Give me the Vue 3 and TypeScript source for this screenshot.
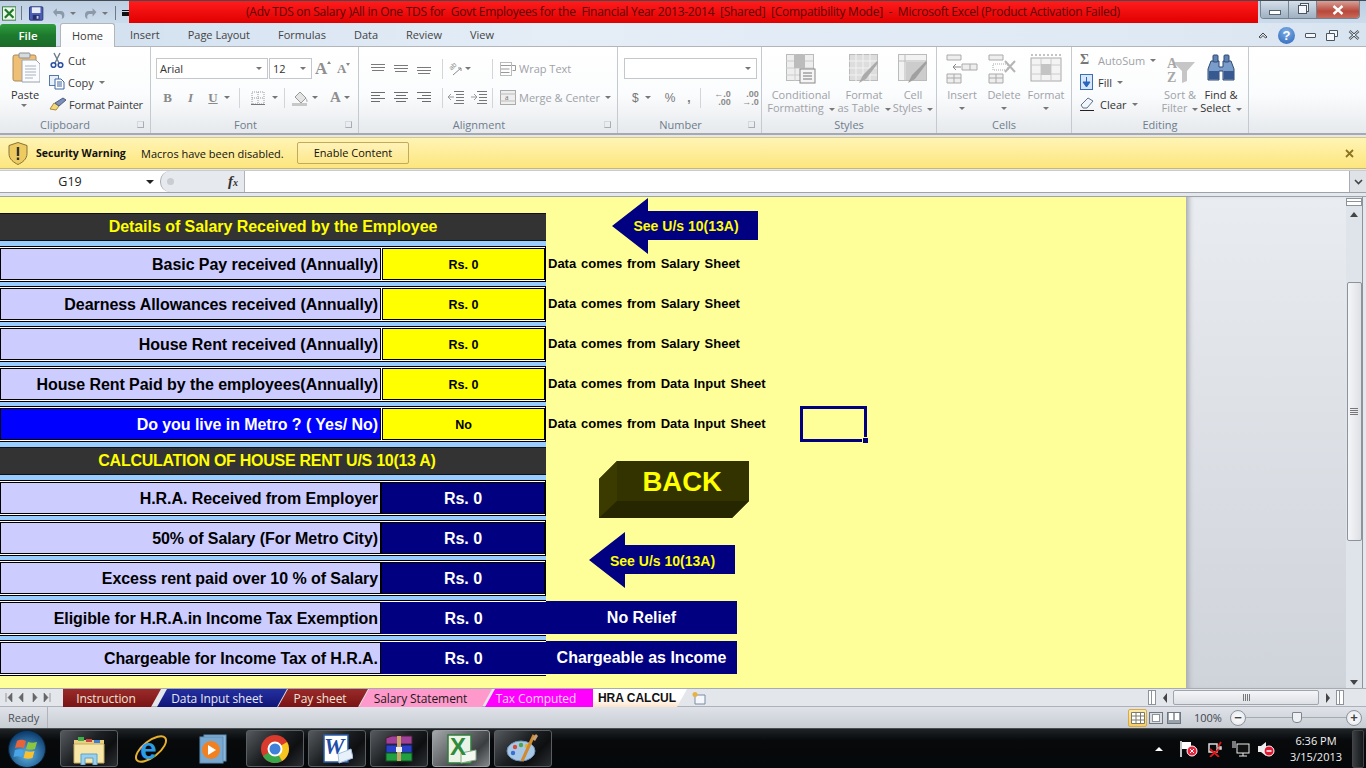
<script setup lang="ts">
interface SheetRow {
  label: string
  value: string
  note?: string
  extra?: string
  kind?: 'metro' | 'calc' | 'open'
}

const salaryRows: SheetRow[] = [
  { label: 'Basic Pay received (Annually)', value: 'Rs. 0', note: 'Data comes from Salary Sheet' },
  { label: 'Dearness Allowances received (Annually)', value: 'Rs. 0', note: 'Data comes from Salary Sheet' },
  { label: 'House Rent received (Annually)', value: 'Rs. 0', note: 'Data comes from Salary Sheet' },
  { label: 'House Rent Paid by the employees(Annually)', value: 'Rs. 0', note: 'Data comes from Data Input Sheet' },
  { label: 'Do you live in Metro ? ( Yes/ No)', value: 'No', note: 'Data comes from Data Input Sheet', kind: 'metro' }
]

const calcRows: SheetRow[] = [
  { label: 'H.R.A. Received from Employer', value: 'Rs. 0', kind: 'calc' },
  { label: '50% of Salary (For Metro City)', value: 'Rs. 0', kind: 'calc' },
  { label: 'Excess rent paid over 10 % of Salary', value: 'Rs. 0', kind: 'calc' },
  { label: 'Eligible for H.R.A.in Income Tax Exemption', value: 'Rs. 0', extra: 'No Relief', kind: 'open' },
  { label: 'Chargeable for Income Tax of H.R.A.', value: 'Rs. 0', extra: 'Chargeable as Income', kind: 'open' }
]

const tabs = ['Insert', 'Page Layout', 'Formulas', 'Data', 'Review', 'View']

const sheetTabs = [
  { name: 'Instruction', cls: 'st-maroon' },
  { name: 'Data Input sheet', cls: 'st-navy' },
  { name: 'Pay sheet', cls: 'st-maroon2' },
  { name: 'Salary Statement', cls: 'st-pink' },
  { name: 'Tax Computed', cls: 'st-magenta' },
  { name: 'HRA CALCUL', cls: 'st-active' }
]
</script>

<template>
  <div class="app">
    <!-- title bar -->
    <div class="titlebar">
      <div class="qat">
        <svg class="xl-ico" width="15" height="15" viewBox="0 0 15 15"><rect x=".5" y=".5" width="14" height="14" fill="#eef6ea" stroke="#2f7d3c"/><path d="M3 3l9 9M12 3l-9 9" stroke="#1f7a2c" stroke-width="2.4"/></svg>
        <span class="qsep"></span>
        <svg width="15" height="15" viewBox="0 0 15 15"><rect x=".5" y=".5" width="14" height="14" rx="1" fill="#4a5fb4" stroke="#2a3878"/><rect x="3" y="1" width="9" height="6" fill="#e8ecf6"/><rect x="4" y="9" width="7" height="5" fill="#27306a"/><rect x="8" y="10" width="2" height="3" fill="#c5cde8"/></svg>
        <svg class="q-undo" width="14" height="13" viewBox="0 0 14 13"><path d="M4 1v3h4c3 0 4 2 4 4s-1 4-3 4c1-1 1-5-2-5H4v3L0 5z" transform="translate(1)" fill="#8c99a8"/></svg>
        <span class="caret q-caret"></span>
        <svg class="q-redo" width="14" height="13" viewBox="0 0 14 13"><path d="M9 1v3H5C2 4 1 6 1 8s1 4 3 4C3 11 3 7 6 7h3v3l4-5z" fill="#8c99a8"/></svg>
        <span class="caret q-caret"></span>
        <span class="qsep qsep2"></span>
        <span class="q-drop"></span>
      </div>
      <div class="red-title">(Adv TDS on Salary )All in One TDS for&nbsp; Govt Employees for the&nbsp; Financial Year 2013-2014&nbsp; [Shared]&nbsp; [Compatibility Mode]&nbsp; -&nbsp; Microsoft Excel (Product Activation Failed)</div>
      <div class="win-btns">
        <div class="wb"><span class="wb-min"></span></div>
        <div class="wb"><span class="wb-max"></span></div>
        <div class="wb wb-close">
          <svg width="12" height="10" viewBox="0 0 12 10"><path d="M1.5 1l9 8M10.5 1l-9 8" stroke="#fff" stroke-width="2.4"/></svg>
        </div>
      </div>
    </div>

    <!-- ribbon tabs -->
    <div class="tabrow">
      <div class="file-tab">File</div>
      <div class="home-tab">Home</div>
      <div class="tab-list">
        <span v-for="t in tabs" :key="t">{{ t }}</span>
      </div>
      <div class="tab-right">
        <svg width="10" height="8" viewBox="0 0 10 8"><path d="M1 6l4-4 4 4-1.5 1L5 4.500 2.500 7z" fill="none" stroke="#444" stroke-width="1"/></svg>
        <span class="help">?</span>
        <span class="mini-min"></span>
        <svg width="12" height="11" viewBox="0 0 12 11"><path d="M3.500 3V.5h8v6H8.500M.5 3.500h8v7h-8z" fill="#f4f7fb" stroke="#4a5560"/></svg>
        <svg width="12" height="10" viewBox="0 0 12 10"><path d="M1.500 1l9 8M10.500 1l-9 8" stroke="#4a5560" stroke-width="2.600"/><path d="M1.500 1l9 8M10.500 1l-9 8" stroke="#f4f7fb" stroke-width="1"/></svg>
      </div>
    </div>

    <!-- ribbon -->
    <div class="ribbon">
      <section class="group g-clip">
        <div class="body">
          <div class="paste">
            <svg width="28" height="31" viewBox="0 0 28 31">
              <rect x="1" y="3" width="23" height="26" rx="2" fill="#eebf75" stroke="#ac8a58"/>
              <rect x="7" y="1" width="11" height="5" rx="1" fill="#d7dade" stroke="#8d8f92"/>
              <path d="M10 8h14l4 4v18H10z" fill="#fbfcfe" stroke="#9aa2ae"/>
              <path d="M13 14h11M13 17h11M13 20h11M13 23h11M13 26h8" stroke="#a9b2bf"/>
            </svg>
            <span class="paste-label">Paste</span>
            <span class="caret"></span>
          </div>
          <div class="clip-list">
            <div class="clip-item">
              <svg width="16" height="16" viewBox="0 0 16 16"><path d="M5 1l5 10M11 1L6 11" stroke="#6f7a88" stroke-width="1.400"/><circle cx="4.500" cy="13" r="2.300" fill="#fff" stroke="#2c4f9e" stroke-width="1.600"/><circle cx="11.500" cy="13" r="2.300" fill="#fff" stroke="#2c4f9e" stroke-width="1.600"/></svg>
              <span class="cut-label">Cut</span>
            </div>
            <div class="clip-item">
              <svg width="16" height="16" viewBox="0 0 16 16"><rect x=".5" y="1.500" width="9" height="10" fill="#e8f0fa" stroke="#5578a8"/><path d="M6 5h6l3 3v7H6z" fill="#fff" stroke="#3f66a2"/><path d="M8 8h5M8 10h5M8 12h5" stroke="#3f66a2"/></svg>
              <span class="cut-label">Copy</span><span class="caret caret-in"></span>
            </div>
            <div class="clip-item painter">
              <svg width="18" height="14" viewBox="0 0 18 14"><path d="M1 12l4-6 5 3-3 4z" fill="#f4d77b" stroke="#a98c3a"/><path d="M6 6l8-5 3 2-7 6z" fill="#7d8fb5" stroke="#4b5d84"/></svg>
              <span>Format Painter</span>
            </div>
          </div>
        </div>
        <div class="group-label lab-wide">Clipboard<span class="launcher"></span></div>
      </section>

      <section class="group g-font">
        <div class="rows">
          <div class="row">
            <div class="combo c-font">Arial<span class="caret"></span></div>
            <div class="combo c-size">12<span class="caret"></span></div>
            <span class="grow-a">A<i class="tri-up"></i></span>
            <span class="shrink-a">A<i class="tri-down"></i></span>
          </div>
          <div class="row font-row2">
            <b class="fmt fmt-b">B</b>
            <i class="fmt fmt-i">I</i>
            <u class="fmt fmt-u">U</u><span class="caret"></span>
            <span class="vsep vs-a"></span>
            <svg class="bd-ico" width="14" height="14" viewBox="0 0 14 14"><path d="M1 1h12v12H1zM7 1v12M1 7h12" fill="none" stroke="#9a9a9a" stroke-dasharray="1 1"/><path d="M0 13.500h14" stroke="#777"/></svg>
            <span class="caret"></span>
            <span class="vsep vs-b"></span>
            <svg class="fill-ico" width="17" height="16" viewBox="0 0 17 16"><path d="M3 7l5-5 6 6-5 5z" fill="#e4e4e4" stroke="#999"/><path d="M14 8c2 2 2 4 1 4s-1-2-1-4z" fill="#b9b9b9"/><rect y="13" width="15" height="3" fill="#c8c8c8"/></svg>
            <span class="caret"></span>
            <span class="color-a">A</span><span class="caret"></span>
          </div>
        </div>
        <div class="group-label lab-pad">Font<span class="launcher"></span></div>
      </section>

      <section class="group g-align">
        <div class="rows">
          <div class="row">
            <span class="cell"><svg width="14" height="9" viewBox="0 0 14 9"><path d="M0 .5h14M0 3.500h14M1 6.500h12" stroke="#7a7a7a"/></svg></span>
            <span class="cell"><svg width="14" height="9" class="mid" viewBox="0 0 14 9"><path d="M0 .5h14M0 3.500h14M1 6.500h12" stroke="#7a7a7a"/></svg></span>
            <span class="cell"><svg width="14" height="9" class="low" viewBox="0 0 14 9"><path d="M0 .5h14M0 3.500h14M1 6.500h12" stroke="#7a7a7a"/></svg></span>
            <span class="vsep vs-c"></span>
            <svg class="orient" width="15" height="14" viewBox="0 0 15 14"><text x="2" y="7" transform="rotate(-45 5 6)" font-size="7" font-family="Liberation Sans" fill="#8a8a8a">ab</text><path d="M5 13l8-7M10 6h3v3" fill="none" stroke="#8a8a8a"/></svg>
            <span class="caret"></span>
            <span class="vsep vs-d"></span>
            <svg width="16" height="14" viewBox="0 0 16 14"><path d="M.5.500h11M.5 3.500h15v5h-3M.5 7h9M.5 10.500h9" fill="none" stroke="#999"/><rect x=".5" y=".5" width="11" height="13" fill="none" stroke="#bbb"/></svg>
            <span class="dim lbl-wrap">Wrap Text</span>
          </div>
          <div class="row">
            <span class="cell"><svg width="14" height="11" viewBox="0 0 14 11"><path d="M0 .5h14M0 3.500h9M0 6.500h14M0 9.500h9" stroke="#6c6c6c"/></svg></span>
            <span class="cell"><svg width="14" height="11" viewBox="0 0 14 11"><path d="M0 .5h14M2 3.500h10M0 6.500h14M2 9.500h10" stroke="#6c6c6c"/></svg></span>
            <span class="cell"><svg width="14" height="11" viewBox="0 0 14 11"><path d="M0 .5h14M5 3.500h9M0 6.500h14M5 9.500h9" stroke="#6c6c6c"/></svg></span>
            <span class="vsep vs-c2"></span>
            <span class="cell indent"><svg width="16" height="13" viewBox="0 0 16 13"><path d="M6 .5h10M8 3.500h8M8 6.500h8M8 9.500h8M6 12.500h10" stroke="#777"/><path d="M0 6h6M3 3L0 6l3 3" fill="none" stroke="#999"/></svg></span>
            <span class="cell indent"><svg width="16" height="13" viewBox="0 0 16 13"><path d="M6 .5h10M8 3.500h8M8 6.500h8M8 9.500h8M6 12.500h10" stroke="#777"/><path d="M0 6h6M3 3l3 3-3 3" fill="none" stroke="#999"/></svg></span>
            <span class="vsep vs-e"></span>
            <svg width="16" height="15" viewBox="0 0 16 15"><rect x=".5" y=".5" width="15" height="14" fill="#eee" stroke="#aaa"/><path d="M0 4h16M0 11h16" stroke="#bbb"/><text x="5" y="10" font-size="8" font-family="Liberation Serif" fill="#777">a</text></svg>
            <span class="dim lbl-wrap">Merge &amp; Center</span><span class="caret caret-in"></span>
          </div>
        </div>
        <div class="group-label lab-pad">Alignment<span class="launcher"></span></div>
      </section>

      <section class="group g-number">
        <div class="rows">
          <div class="row"><div class="combo c-num"><span class="caret"></span></div></div>
          <div class="row num-row2">
            <span class="num-sym n-dollar">$</span><span class="caret"></span>
            <span class="num-sym n-pct">%</span>
            <span class="num-sym n-comma">,</span>
            <span class="vsep vs-f"></span>
            <span class="dec">←.0<br>.00</span>
            <span class="dec dec2">.00<br>→.0</span>
          </div>
        </div>
        <div class="group-label lab-pad">Number<span class="launcher"></span></div>
      </section>

      <section class="group g-styles">
        <div class="big-row">
          <div class="big w-cond">
            <svg width="30" height="30" viewBox="0 0 30 30"><rect x=".5" y=".5" width="27" height="26" fill="#eee" stroke="#bbb"/><path d="M9 0v27M18 0v27M0 7h27M0 14h27M0 21h27" stroke="#ccc"/><rect x="8" y="1" width="11" height="13" fill="#bcbcbc"/><rect x="14" y="15" width="15" height="14" fill="#f5f5f5" stroke="#888"/><path d="M17 19h9M17 22h9M17 25h9" stroke="#777"/></svg>
            <span class="big-label">Conditional<br>Formatting<i class="caret caret-in"></i></span>
          </div>
          <div class="big w-table">
            <svg width="30" height="30" viewBox="0 0 30 30"><rect x=".5" y=".5" width="28" height="26" fill="#ddd" stroke="#bbb"/><path d="M7 0v27M14 0v27M21 0v27M0 7h28M0 14h28M0 21h28" stroke="#f2f2f2"/><path d="M10 29l4-8 14-14 1 2-12 16z" fill="#aaa"/></svg>
            <span class="big-label">Format<br>as Table<i class="caret caret-in"></i></span>
          </div>
          <div class="big w-cell">
            <svg width="30" height="30" viewBox="0 0 30 30"><rect x=".5" y=".5" width="28" height="26" fill="#f2f2f2" stroke="#bbb"/><path d="M0 7h28M7 0v27" stroke="#bbb"/><rect x="8" y="8" width="20" height="18" fill="#ccc"/><path d="M10 29l4-8 14-14 1 2-12 16z" fill="#a0a0a0"/></svg>
            <span class="big-label">Cell<br>Styles<i class="caret caret-in"></i></span>
          </div>
        </div>
        <div class="group-label">Styles</div>
      </section>

      <section class="group g-cells">
        <div class="big-row">
          <div class="big w-ins">
            <svg width="32" height="30" viewBox="0 0 32 30"><path d="M1 1h14v5H1zM1 20h14v9H1zM8 20v9M1 24h14M16 10h15v6H16zM24 10v6" fill="#eee" stroke="#aaa"/><path d="M7 13h8M10 10l-3 3 3 3" fill="none" stroke="#888"/></svg>
            <span class="big-label">Insert</span><span class="caret"></span>
          </div>
          <div class="big w-ins">
            <svg width="32" height="30" viewBox="0 0 32 30"><path d="M1 1h14v5H1zM1 20h14v9H1zM8 20v9M1 24h14" fill="#eee" stroke="#aaa"/><rect x="5" y="10" width="15" height="6" fill="none" stroke="#aaa" stroke-dasharray="1 1"/><path d="M17 7l10 11M27 7L17 18" stroke="#b5b5b5" stroke-width="2"/></svg>
            <span class="big-label">Delete</span><span class="caret"></span>
          </div>
          <div class="big w-ins">
            <svg width="32" height="30" viewBox="0 0 32 30"><rect x="1" y="4" width="30" height="23" fill="#f3f3f3" stroke="#aaa"/><path d="M1 11h30M1 20h30M11 4v23M21 4v23" stroke="#ccc"/><rect x="11" y="10" width="10" height="11" fill="#c4c4c4"/><path d="M1 1h30" stroke="#888" stroke-dasharray="2 2"/></svg>
            <span class="big-label">Format</span><span class="caret"></span>
          </div>
        </div>
        <div class="group-label">Cells</div>
      </section>

      <section class="group g-edit">
        <div class="body">
          <div class="edit-list">
            <div class="clip-item"><span class="sigma">Σ</span><span class="dim">AutoSum</span><span class="caret caret-in"></span></div>
            <div class="clip-item">
              <svg width="13" height="16" viewBox="0 0 13 16"><rect x=".5" y=".5" width="12" height="15" fill="#d7e6f8" stroke="#3a6fb8"/><path d="M6.500 3v6M3 8h7l-3.500 5z" fill="#2a66c0" stroke="#2a66c0"/></svg>
              <span class="edit-txt">Fill</span><span class="caret caret-in"></span>
            </div>
            <div class="clip-item">
              <svg width="15" height="14" viewBox="0 0 15 14"><path d="M1 8l7-7 5 3-6 7H3z" fill="#f3f6fa" stroke="#5d7390"/><path d="M0 13.500h14" stroke="#222"/></svg>
              <span class="edit-txt">Clear</span><span class="caret caret-in"></span>
            </div>
          </div>
          <div class="big w-sort">
            <svg width="30" height="30" viewBox="0 0 30 30"><path d="M8 8h22l-8 9v10l-5 2V17z" fill="#c6c6c6"/><text x="2" y="14" font-size="14" font-weight="700" font-family="Liberation Serif" fill="#a8a8a8">A</text><text x="2" y="28" font-size="14" font-weight="700" font-family="Liberation Serif" fill="#a8a8a8">Z</text></svg>
            <span class="big-label">Sort &amp;<br>Filter<i class="caret caret-in"></i></span>
          </div>
          <div class="big w-find">
            <svg width="28" height="30" viewBox="0 0 28 30">
              <path d="M4 7h8v6h4V7h8l3 8v11H16V17h-4v9H1V15z" fill="#7a9ccb" stroke="#30496f"/>
              <rect x="2" y="17" width="10" height="8" fill="#38598f"/>
              <rect x="17" y="17" width="10" height="8" fill="#38598f"/>
              <rect x="6" y="1" width="5" height="7" rx="1" fill="#5f81b6" stroke="#30496f"/>
              <rect x="17" y="1" width="5" height="7" rx="1" fill="#5f81b6" stroke="#30496f"/>
            </svg>
            <span class="big-label dark">Find &amp;<br>Select<i class="caret caret-in"></i></span>
          </div>
        </div>
        <div class="group-label">Editing</div>
      </section>
    </div>

    <!-- security warning -->
    <div class="security">
      <svg class="shield" width="20" height="23" viewBox="0 0 20 23"><path d="M10 .5l9 3v8c0 6-5 9-9 11-4-2-9-5-9-11v-8z" fill="#eecb60" stroke="#857238"/><rect x="8.800" y="5" width="2.400" height="9" fill="#333"/><rect x="8.800" y="15.500" width="2.400" height="2.500" fill="#333"/></svg>
      <b class="sec-title">Security Warning</b>
      <span class="sec-text">Macros have been disabled.</span>
      <span class="sec-btn">Enable Content</span>
      <svg class="sec-x" width="9" height="9" viewBox="0 0 9 9"><path d="M1 1l7 7M8 1L1 8" stroke="#8c7420" stroke-width="1.800"/></svg>
    </div>

    <!-- formula bar -->
    <div class="formula">
      <div class="namebox">G19<span class="caret dark-caret"></span></div>
      <div class="fx-zone"><span class="fx-pill"></span><i class="fx">f<small>x</small></i></div>
      <div class="fx-input"></div>
      <div class="fx-expand"><svg width="9" height="6" viewBox="0 0 9 6"><path d="M1 1l3.500 3.500L8 1" fill="none" stroke="#444" stroke-width="1.600"/></svg></div>
    </div>

    <!-- sheet -->
    <div class="sheet-area">
      <div class="sheet">
        <h2 class="band">Details of Salary Received by the Employee</h2>
        <div v-for="(row, i) in salaryRows" :key="row.label" class="line">
          <div class="pair" :class="{ first: i === 0 }">
            <div class="frame" :class="row.kind">
              <div class="label">{{ row.label }}</div>
              <div class="value">{{ row.value }}</div>
            </div>
          </div>
          <div class="note">{{ row.note }}</div>
        </div>
        <div class="gutter"></div>
        <h2 class="band band-calc">CALCULATION OF HOUSE RENT U/S 10(13 A)</h2>
        <div v-for="(row, i) in calcRows" :key="row.label" class="line">
          <div class="pair" :class="{ first: i === 0 }">
            <div class="frame" :class="row.kind">
              <div class="label">{{ row.label }}</div>
              <div class="value">{{ row.value }}</div>
            </div>
          </div>
          <div v-if="row.extra" class="extra">{{ row.extra }}</div>
        </div>

        <svg class="arrow arrow-a" width="147" height="56" viewBox="0 0 147 56">
          <path d="M0 28L36 0v13h110v29H36v14z" fill="#000080"/>
          <text x="21.500" y="33" class="arrow-text">See U/s 10(13A)</text>
        </svg>
        <svg class="arrow arrow-b" width="147" height="56" viewBox="0 0 147 56">
          <path d="M0 28L36 0v13h110v29H36v14z" fill="#000080"/>
          <text x="21" y="34" class="arrow-text">See U/s 10(13A)</text>
        </svg>
        <svg class="back" width="150" height="57" viewBox="0 0 150 57">
          <path d="M0 18L18 0h132v40l-17 17H0z" fill="#333300"/>
          <path d="M0 18L18 0v40L0 57z" fill="#3b3b00"/>
          <path d="M18 40h132l-17 17H0z" fill="#262600"/>
          <text x="43.500" y="30" class="back-text">BACK</text>
        </svg>
        <div class="selected"><span class="handle"></span></div>
      </div>
      <div class="outside"></div>
      <div class="vscroll">
        <span class="split-h"></span>
        <span class="tri tri-u"></span>
        <div class="v-thumb"><span class="grip-h"></span></div>
        <span class="tri tri-d"></span>
      </div>
    </div>

    <!-- sheet tabs -->
    <div class="tabsbar">
      <div class="tab-nav">
        <svg width="48" height="9" viewBox="0 0 48 9"><path d="M1 0v9M7 0L3 4.500 7 9zM18 0l-4 4.500L18 9zM28 0l4 4.500L28 9zM39 0l4 4.500L39 9zM45 0v9" fill="#666" stroke="#666" stroke-width=".6"/></svg>
      </div>
      <div class="sheet-tabs">
        <span v-for="s in sheetTabs" :key="s.name" class="stab" :class="s.cls">{{ s.name }}</span>
        <svg class="new-sheet" width="16" height="14" viewBox="0 0 16 14"><path d="M4 4h10v9H4z" fill="#f4f7fb" stroke="#7a8ca5"/><circle cx="4" cy="3.500" r="2.500" fill="#e9b23f"/></svg>
      </div>
      <div class="hscroll">
        <span class="split-v"></span>
        <span class="tri tri-l"></span>
        <div class="h-thumb"><span class="grip-v"></span></div>
        <span class="tri tri-r"></span>
        <span class="split-v"></span>
      </div>
    </div>

    <!-- status bar -->
    <div class="status">
      <span class="ready">Ready</span>
      <div class="status-right">
        <span class="view view-on"><svg width="14" height="12" viewBox="0 0 14 12"><path d="M.5.500h13v11H.5zM.5 4h13M.5 8h13M5 .5v11M9.500.500v11" fill="#fff" stroke="#7a7a6a"/></svg></span>
        <span class="view"><svg width="14" height="12" viewBox="0 0 14 12"><rect x=".5" y=".5" width="13" height="11" fill="#d9dde2" stroke="#6e7680"/><rect x="3.500" y="2.500" width="7" height="7" fill="#fff" stroke="#8a929c"/></svg></span>
        <span class="view"><svg width="14" height="12" viewBox="0 0 14 12"><rect x=".5" y=".5" width="13" height="11" fill="#9aa2ab" stroke="#6e7680"/><rect x="2" y="1" width="4" height="7" fill="#fff"/><rect x="8" y="1" width="4" height="7" fill="#fff"/></svg></span>
        <span class="zoom-pct">100%</span>
        <span class="zoom-btn">−</span>
        <div class="slider"><span class="slider-thumb"></span></div>
        <span class="zoom-btn">+</span>
      </div>
    </div>

    <!-- taskbar -->
    <div class="taskbar">
      <svg class="orb" width="38" height="38" viewBox="0 0 38 38">
        <defs>
          <radialGradient id="orbg" cx="50%" cy="65%" r="60%"><stop offset="0" stop-color="#5fb4e8"/><stop offset="1" stop-color="#0f3f70"/></radialGradient>
        </defs>
        <circle cx="19" cy="19" r="18.500" fill="url(#orbg)" stroke="#0b2238"/>
        <path d="M9 11c4-2 6-1 9 0l-2 7c-3-1-6-1-9 0z" fill="#e8623a"/>
        <path d="M20 12c3 1 5 1 9 0l-2 7c-3 1-6 1-9 0z" fill="#8cc63e"/>
        <path d="M7 20c3-1 6-1 8.500 0l-2 7c-3-1-5-1-8 0z" fill="#48a5e8"/>
        <path d="M17.500 21c3 1 6 1 9 0l-2 7c-3 1-6 1-9 0z" fill="#f7c02f"/>
      </svg>
      <div class="task framed">
        <svg width="34" height="32" viewBox="0 0 34 32"><path d="M2 7h30v22H2z" fill="#e8cf84"/><path d="M2 11h30v19H2z" fill="#f6e6a8" stroke="#c9ab5e"/><rect x="6" y="4" width="6" height="4" fill="#3fae49"/><rect x="14" y="6" width="6" height="3" fill="#c8443c"/><rect x="22" y="7" width="6" height="3" fill="#3d7fd0"/><path d="M9 32V21h16v11h-4v-7h-8v7z" fill="#9ad0ee" stroke="#5da2cc"/></svg>
      </div>
      <div class="task">
        <svg width="34" height="34" viewBox="0 0 34 34"><ellipse cx="17" cy="17" rx="18" ry="8" transform="rotate(-38 17 17)" fill="none" stroke="#e8b12c" stroke-width="2"/><text x="6" y="27" class="ie-e">e</text></svg>
      </div>
      <div class="task">
        <svg width="28" height="30" viewBox="0 0 28 30"><rect x="5" y="1" width="22" height="26" fill="#8fb6d8" stroke="#5f8fb8"/><rect x="1" y="3" width="23" height="26" fill="#78a8d0" stroke="#5f8fb8"/><circle cx="12" cy="16" r="9" fill="#f08020"/><path d="M9 11l8 5-8 5z" fill="#fff"/></svg>
      </div>
      <div class="task framed">
        <svg width="30" height="30" viewBox="0 0 30 30"><circle cx="15" cy="15" r="14" fill="#d83a2c"/><path d="M15 15L2.900 22A14 14 0 0 0 22 27.100z" fill="#3aa84a"/><path d="M15 15l12.100-7A14 14 0 0 1 22 27.100z" fill="#f6c51f"/><circle cx="15" cy="15" r="6.500" fill="#3f80d8" stroke="#fff" stroke-width="2"/></svg>
      </div>
      <div class="task framed">
        <svg width="32" height="30" viewBox="0 0 32 30"><path d="M3 1h24v27H3z" fill="#fff" stroke="#2a5ca8" stroke-width="1.500"/><path d="M17 20l13-5 2 9-14 5z" fill="#e8f0fa" stroke="#a8c0e0"/><text x="3" y="20" class="word-w">W</text></svg>
      </div>
      <div class="task framed">
        <svg width="32" height="28" viewBox="0 0 32 28"><path d="M3 3l6-2h20v8H3z" fill="#a0409a" stroke="#4a2030"/><rect x="3" y="10" width="26" height="8" fill="#2a40c8" stroke="#10205a"/><rect x="3" y="18" width="26" height="8" fill="#20a040" stroke="#105020"/><rect x="14" y="1" width="4" height="25" fill="#c9a468"/><rect x="13" y="12" width="6" height="5" fill="#eee"/></svg>
      </div>
      <div class="task framed active">
        <svg width="32" height="30" viewBox="0 0 32 30"><rect x="3" y="1" width="23" height="28" fill="#eaf3e6" stroke="#2f7d3c" stroke-width="1.500"/><path d="M16 19l15-3v10l-15 3z" fill="#f3f7ef" stroke="#88a888"/><text x="5" y="21" class="excel-x">X</text></svg>
      </div>
      <div class="task framed">
        <svg width="34" height="32" viewBox="0 0 34 32"><ellipse cx="15" cy="18" rx="14" ry="10" fill="#a8c8e8" stroke="#6f93b8"/><circle cx="9" cy="14" r="2.200" fill="#d84a3a"/><circle cx="15" cy="12" r="2.200" fill="#4aa84a"/><circle cx="7" cy="20" r="2.200" fill="#3a6fd0"/><circle cx="21" cy="13" r="2.200" fill="#e8b02a"/><path d="M28 2L16 28" stroke="#d08a30" stroke-width="3"/><path d="M26 6l4-5 2 2-3 5z" fill="#c8a078"/></svg>
      </div>
      <div class="tray">
        <span class="tray-up"></span>
        <svg width="20" height="16" viewBox="0 0 20 16"><path d="M1 0v16" stroke="#fff" stroke-width="1.500"/><path d="M2 1h9v7H2z" fill="#fff"/><circle cx="12" cy="10" r="5" fill="#e8243c" stroke="#fff"/><path d="M10 8l4 4M14 8l-4 4" stroke="#fff"/></svg>
        <svg width="18" height="16" viewBox="0 0 18 16"><path d="M2 3h8v3h4v2h-4v3H2z" fill="none" stroke="#ddd" stroke-width="1.500"/><path d="M14 1l-3 5M3 8l9 8M12 8l-9 8" stroke="#e01818" stroke-width="1.800"/></svg>
        <svg width="18" height="16" viewBox="0 0 18 16"><rect x="5" y="3" width="12" height="9" fill="#111" stroke="#eee"/><path d="M7 15h8M11 12v3M1 0v7M3 0v7" stroke="#eee"/></svg>
        <svg width="18" height="16" viewBox="0 0 18 16"><path d="M1 5h3l5-4v14l-5-4H1z" fill="#eee"/><circle cx="12" cy="10" r="5" fill="#e01830" stroke="#fff"/><path d="M9.500 10h5" stroke="#fff" stroke-width="1.500"/></svg>
      </div>
      <div class="clock"><span>6:36 PM</span><span>3/15/2013</span></div>
      <span class="show-desk"></span>
    </div>
  </div>
</template>

<style>
html, body {
  margin: 0;
  overflow: hidden;
  background: #000;
}
</style>

<style scoped>
.app {
  width: 1366px;
  height: 768px;
  display: flex;
  flex-direction: column;
  overflow: hidden;
  font-family: "Open Sans", "Liberation Sans", sans-serif;
  font-size: 11px;
  color: #3b3b3b;
  background: #e4e8ee;
}

.caret {
  display: inline-block;
  width: 0;
  height: 0;
  flex: none;
  border-left: 3px solid transparent;
  border-right: 3px solid transparent;
  border-top: 3px solid #777;
}
.caret-in { margin-left: 5px; vertical-align: middle; }

/* title bar */
.titlebar {
  height: 23px;
  flex: none;
  display: flex;
  background: linear-gradient(#bdcfe2, #cddcec);
  border-top: 1px solid #444a52;
  box-sizing: border-box;
}
.qat { width: 129px; display: flex; align-items: center; padding: 2px 0 0 2px; box-sizing: border-box; flex: none; }
.qsep { width: 1px; height: 14px; background: #6e7884; margin: 0 7px 0 5px; }
.qsep2 { margin: 0 5px 0 7px; }
.q-undo { margin-left: 8px; }
.q-redo { margin-left: 8px; }
.q-caret { margin-left: 5px; }
.q-drop { width: 7px; height: 1px; border-bottom: 4px solid #111; border-top: 1px solid #111; margin-left: 1px; }
.red-title {
  width: 1129px;
  height: 22px;
  flex: none;
  box-sizing: border-box;
  padding-right: 21px;
  text-align: center;
  line-height: 22px;
  font-size: 12px;
  white-space: nowrap;
  color: #5c0505;
  background: linear-gradient(#ff1c1c, #e00000);
  letter-spacing: -0.26px;
}
.win-btns { display: flex; height: 18px; margin-left: 2px; border: 1px solid #75828f; border-top: none; border-radius: 0 0 4px 4px; box-sizing: border-box; overflow: hidden; }
.wb { width: 27px; display: flex; align-items: center; justify-content: center; background: linear-gradient(#d4dfea, #9fb0c2); border-right: 1px solid #75828f; }
.wb-close { width: 42px; border: none; background: linear-gradient(#d8a198, #b8483a 60%, #c86a5c); }
.wb-min { width: 10px; height: 3px; border: 1px solid #56626e; background: #fff; margin-top: 6px; }
.wb-max { width: 7px; height: 7px; border: 1px solid #4b5560; box-shadow: 2px -2px 0 -1px #f4f7fb, 2px -2px 0 0 #4b5560; background: #f4f7fb; }

/* tabs */
.tabrow {
  height: 24px;
  flex: none;
  display: flex;
  align-items: flex-end;
  background: linear-gradient(90deg, #cfdeee, #e5eef7 40%, #dfe9f4 85%, #d8e4f0);
  box-sizing: border-box;
  border-bottom: 1px solid #b2b5b9;
  position: relative;
}
.file-tab {
  width: 56px;
  height: 23px;
  margin-bottom: -1px;
  background: linear-gradient(#2f9d3e, #1d7a2d 50%, #1c6a2a);
  color: #fff;
  text-align: center;
  line-height: 23px;
  font-size: 11.5px;
  border-radius: 3px 3px 0 0;
  font-weight: 600;
}
.home-tab {
  width: 55px;
  height: 24px;
  margin: 0 0 -1px 4px;
  background: linear-gradient(#fff, #fafbfc);
  border: 1px solid #b2b5b9;
  border-bottom: none;
  border-radius: 3px 3px 0 0;
  text-align: center;
  line-height: 23px;
  box-sizing: border-box;
  position: relative;
}
.tab-list { display: flex; gap: 28px; height: 22px; line-height: 22px; margin-left: 15px; color: #444; }
.tab-right {
  margin-left: auto;
  display: flex;
  align-items: center;
  gap: 10px;
  height: 22px;
  padding-right: 6px;
}
.help {
  width: 17px;
  height: 17px;
  border-radius: 50%;
  background: radial-gradient(circle at 50% 30%, #7fb0e8, #2a62b8);
  color: #fff;
  font: 700 13px/17px "Liberation Sans", sans-serif;
  text-align: center;
}
.mini-min { width: 9px; height: 3px; border: 1px solid #4a5560; background: #f4f7fb; border-radius: 1px; }

/* ribbon */
.ribbon {
  height: 88px;
  flex: none;
  display: flex;
  background: linear-gradient(#fff, #fbfcfd 55%, #e6e9ed);
  border-bottom: 2px solid #a6a9ad;
  box-sizing: border-box;
}
.group {
  display: flex;
  flex-direction: column;
  flex: none;
  box-sizing: border-box;
  border-right: 1px solid #c5cad0;
  position: relative;
}
.g-clip { width: 151px; }
.g-font { width: 208px; }
.g-align { width: 259px; }
.g-number { width: 144px; }
.g-styles { width: 175px; }
.g-cells { width: 135px; }
.g-edit { width: 177px; }
.group-label {
  margin-top: auto;
  height: 16px;
  line-height: 16px;
  text-align: center;
  color: #6e7c8d;
  position: relative;
  box-sizing: border-box;
}
.lab-wide { padding-right: 20px; }
.lab-pad { padding-right: 18px; }
.launcher {
  position: absolute;
  right: 6px;
  top: 4px;
  width: 5px;
  height: 5px;
  border: 1px solid #a8adb3;
  border-left-color: #d5d8db;
  border-top-color: #d5d8db;
}
.body { display: flex; }
.paste {
  width: 48px;
  padding: 5px 0 0 12px;
  box-sizing: border-box;
  display: flex;
  flex-direction: column;
  align-items: flex-start;
}
.paste-label { margin: 5px 0 2px -1px; color: #333; line-height: 14px; }
.paste .caret { margin-left: 9px; }
.clip-list { padding-top: 2px; margin-left: 1px; }
.clip-item { height: 22px; display: flex; align-items: center; white-space: nowrap; }
.cut-label { margin-left: 3px; }
.painter svg { margin-right: 2px; }
.painter span { letter-spacing: -0.2px; }

.rows { padding: 11px 0 0 0; display: flex; flex-direction: column; gap: 8px; }
.row { display: flex; align-items: center; height: 21px; }
.combo {
  height: 21px;
  box-sizing: border-box;
  border: 1px solid #c4c8cd;
  background: #fff;
  display: flex;
  align-items: center;
  justify-content: space-between;
  padding: 0 5px 0 3px;
  font-size: 11px;
  color: #333;
}
.c-font { width: 112px; margin-left: 5px; }
.c-size { width: 43px; margin-left: 1px; }
.c-num { width: 133px; margin-left: 6px; justify-content: flex-end; }
.grow-a, .shrink-a, .color-a {
  font-family: "Liberation Serif", serif;
  font-weight: 700;
  color: #8f8f8f;
  position: relative;
}
.grow-a { font-size: 17px; margin-left: 3px; width: 22px; }
.shrink-a { font-size: 13px; width: 14px; }
.tri-up, .tri-down { position: absolute; left: 12px; top: 2px; width: 0; height: 0; border-left: 2px solid transparent; border-right: 2px solid transparent; }
.tri-up { border-bottom: 3px solid #888; }
.tri-down { left: 9px; border-top: 3px solid #888; }
.font-row2 .caret { margin-left: 3px; }
.fmt {
  font: 700 13px "Liberation Serif", serif;
  color: #8a8a8a;
  width: 23px;
  text-align: center;
}
.fmt-b { margin-left: 5px; }
.fmt-u { width: 16px; margin-left: 3px; }
.fmt-i { font-style: italic; }
.vsep { width: 1px; height: 20px; background: #d2d6db; flex: none; }
.vs-a { margin: 0 11px 0 9px; }
.bd-ico { margin-right: 4px; }
.vs-b { margin: 0 7px 0 6px; }
.color-a { font-size: 15px; margin-left: 12px; }
.cell { width: 23px; display: flex; justify-content: center; flex: none; }
.cell:first-child { margin-left: 7px; }
.mid { transform: translateY(1px); }
.low { transform: translateY(3px); }
.vs-c { margin: 0 5px 0 7px; }
.vs-c2 { margin: 0 1px 0 7px; }
.orient { margin-right: 2px; overflow: visible; }
.vs-d { margin: 0 7px 0 21px; }
.indent { width: 23px; }
.vs-e { margin: 0 7px 0 2px; }
.dim { color: #9ea2a7; }
.lbl-wrap { margin-left: 3px; }
.num-sym { font-family: "Liberation Sans", sans-serif; color: #777; font-size: 12px; }
.num-row2 .caret { margin-left: 6px; }
.n-dollar { margin-left: 14px; }
.n-pct { margin-left: 14px; }
.n-comma { margin-left: 12px; font-weight: 700; }
.vs-f { margin: 0 12px 0 9px; }
.dec {
  font: 700 9px/8px "Liberation Sans", sans-serif;
  color: #8a8a8a;
  text-align: right;
  width: 18px;
}
.dec2 { margin-left: 10px; }

.big-row { display: flex; }
.big {
  display: flex;
  flex-direction: column;
  align-items: center;
  padding-top: 7px;
  flex: none;
}
.big-label {
  margin-top: 4px;
  text-align: center;
  line-height: 13px;
  color: #9ea2a7;
  white-space: nowrap;
}
.big-label.dark { color: #333; }
.big .caret { margin-top: 6px; }
.big-label .caret { margin-top: 0; }
.w-cond { width: 78px; }
.w-table { width: 54px; margin-left: -3px; }
.w-cell { width: 44px; }
.w-ins { width: 42px; }
.w-ins:first-child { margin-left: 4px; }
.edit-list { width: 86px; padding: 2px 0 0 8px; box-sizing: border-box; }
.sigma { width: 18px; font: 700 14px "Liberation Serif", serif; color: #777; }
.edit-txt { margin-left: 5px; color: #333; }
.w-sort { width: 44px; }
.w-find { width: 38px; }

/* security bar */
.security {
  height: 32px;
  flex: none;
  margin-top: 2px;
  display: flex;
  align-items: center;
  background: linear-gradient(#fff4b4, #fde67e);
  border-top: 1px solid #d9c87c;
  border-bottom: 1px solid #c8b86c;
  box-sizing: border-box;
  padding-left: 8px;
  color: #111;
}
.shield { flex: none; }
.sec-title { margin-left: 8px; width: 105px; font-weight: 700; white-space: nowrap; font-size: 10.500px; }
.sec-text { width: 156px; white-space: nowrap; font-size: 11px; }
.sec-btn {
  width: 112px;
  height: 22px;
  line-height: 20px;
  text-align: center;
  border: 1px solid #c2aa5a;
  border-radius: 2px;
  box-sizing: border-box;
  background: linear-gradient(#fff3b8, #fde88c);
  font-size: 11px;
}
.sec-x { margin-left: auto; margin-right: 12px; }

/* formula bar */
.formula {
  height: 23px;
  flex: none;
  margin-top: 1px;
  display: flex;
  background: #fff;
  border-top: 1px solid #c8ccd1;
  border-bottom: 1px solid #9ea3a9;
  box-sizing: border-box;
}
.namebox {
  width: 160px;
  display: flex;
  align-items: center;
  justify-content: center;
  padding-right: 20px;
  box-sizing: border-box;
  position: relative;
  color: #222;
  font-size: 12.500px;
}
.dark-caret { position: absolute; right: 6px; top: 9px; border-top-color: #222; border-left-width: 4px; border-right-width: 4px; border-top-width: 4px; }
.fx-zone {
  width: 85px;
  background: #e6e9ee;
  border-right: 1px solid #b0b4b9;
  box-sizing: border-box;
  border-radius: 10px 0 0 10px;
  border-left: 1px solid #a8acb2;
  display: flex;
  align-items: center;
  padding: 0 6px 0 6px;
}
.fx-pill { width: 7px; height: 7px; border-radius: 50%; background: #c9cdd2; }
.fx {
  margin-left: auto;
  font: italic 700 15px "Liberation Serif", serif;
  color: #333;
}
.fx small { font-size: 10px; }
.fx-input { flex: 1; }
.fx-expand {
  width: 16px;
  background: #dfe3e8;
  border-left: 1px solid #aab;
  display: flex;
  align-items: center;
  justify-content: center;
}

/* sheet */
.sheet-area {
  flex: none;
  height: 492px;
  margin-top: 3px;
  border-top: 1px solid #9ea3a9;
  box-sizing: border-box;
  display: flex;
  background: #e4e8ee;
}
.sheet {
  width: 1186px;
  flex: none;
  background: #ffff99;
  padding-top: 16px;
  box-sizing: border-box;
  position: relative;
  font-family: "Liberation Sans", Arial, sans-serif;
}
.band {
  width: 546px;
  height: 28px;
  margin: 0;
  background: #333333;
  color: #ffff00;
  font-size: 16px;
  font-weight: 700;
  line-height: 25px;
  text-align: center;
  box-sizing: border-box;
  border-top: 1px solid #111;
  border-bottom: 1px solid #111;
  white-space: nowrap;
  letter-spacing: -0.05px;
}
.band-calc { letter-spacing: -0.27px; padding-right: 12px; }
.line { display: flex; }
.pair {
  width: 546px;
  flex: none;
  background: #99ccff;
  padding-top: 4px;
}
.pair.first { padding-top: 5px; }
.gutter { width: 546px; height: 5px; background: #99ccff; }
.frame {
  height: 36px;
  box-sizing: border-box;
  border: 1px solid #000;
  border-left: none;
  padding: 1px 0 1px 0;
  display: flex;
  background: #fff;
}
.label {
  width: 381px;
  box-sizing: border-box;
  background: #ccccff;
  border: 1px solid #000;
  border-left: 1px solid #000;
  color: #000;
  font-size: 16px;
  font-weight: 700;
  text-align: right;
  line-height: 32px;
  padding-right: 2px;
  white-space: nowrap;
  letter-spacing: -0.06px;
  overflow: hidden;
}
.value {
  width: 163px;
  margin-left: 1px;
  box-sizing: border-box;
  background: #ffff00;
  border: 1px solid #000;
  color: #000;
  font-size: 12.500px;
  font-weight: 700;
  text-align: center;
  line-height: 32px;
  overflow: hidden;
}
.metro .label { background: #0000ff; color: #fff; }
.calc .value, .open .value {
  background: #000080;
  color: #fff;
  font-size: 16px;
}
.calc .value { margin-left: 0; width: 164px; }
.open { border-right: none; border-color: #000; }
.open .value { margin-left: 0; width: 165px; border: none; line-height: 34px; }
.note {
  margin-left: 2px;
  align-self: flex-end;
  height: 36px;
  font-size: 13px;
  font-weight: 700;
  line-height: 36px;
  color: #000;
  word-spacing: 1.200px;
  white-space: nowrap;
}
.extra {
  width: 191px;
  height: 33px;
  margin-top: 5px;
  background: #000080;
  color: #fff;
  font-size: 16px;
  font-weight: 700;
  line-height: 33px;
  text-align: center;
  white-space: nowrap;
}
.arrow { position: absolute; }
.arrow-a { left: 612px; top: 1px; }
.arrow-b { left: 589px; top: 335px; }
.arrow-text {
  font: 700 14px "Liberation Sans", sans-serif;
  fill: #ffff00;
}
.back { position: absolute; left: 599px; top: 264px; }
.back-text {
  font: 700 27.500px "Liberation Sans", sans-serif;
  fill: #ffff00;
}
.selected {
  position: absolute;
  left: 800px;
  top: 209px;
  width: 67px;
  height: 36px;
  box-sizing: border-box;
  border: 3px solid #000080;
}
.handle {
  position: absolute;
  right: -4px;
  bottom: -4px;
  width: 5px;
  height: 5px;
  background: #000080;
  border-left: 1px solid #ffff99;
  border-top: 1px solid #ffff99;
}
.outside {
  width: 160px;
  flex: none;
  background: linear-gradient(#e9ecf0, #cfd3da);
  box-shadow: inset 6px 0 5px -3px #a9adb3;
}
.vscroll {
  width: 16px;
  flex: none;
  background: #dfe3ea;
  border-right: 1px solid #8d939b;
  display: flex;
  flex-direction: column;
  align-items: center;
  position: relative;
}
.split-h {
  width: 14px;
  height: 6px;
  margin-top: 1px;
  border: 1px solid #8d939b;
  background: linear-gradient(#fff 35%, #8d939b 35%, #8d939b 55%, #fff 55%);
  box-sizing: content-box;
  flex: none;
}
.tri { width: 0; height: 0; flex: none; }
.tri-u { margin-top: 6px; border-left: 4px solid transparent; border-right: 4px solid transparent; border-bottom: 5px solid #444; }
.tri-d { margin-top: auto; margin-bottom: 3px; border-left: 4px solid transparent; border-right: 4px solid transparent; border-top: 5px solid #444; }
.v-thumb {
  width: 15px;
  height: 259px;
  margin-top: 65px;
  box-sizing: border-box;
  border: 1px solid #8d939b;
  background: linear-gradient(90deg, #f5f6f8, #dde0e5);
  border-radius: 2px;
  display: flex;
  align-items: center;
  justify-content: center;
}
.grip-h { width: 8px; height: 7px; background: repeating-linear-gradient(#777 0 1px, transparent 1px 2px); }

/* sheet tabs */
.tabsbar {
  height: 19px;
  flex: none;
  display: flex;
  align-items: stretch;
  background: #e3e6eb;
  border-top: 1px solid #a8acb2;
  box-sizing: border-box;
  border-bottom: 1px solid #aeb2b8;
}
.tab-nav { width: 63px; flex: none; display: flex; align-items: center; padding-left: 5px; box-sizing: border-box; }
.sheet-tabs { display: flex; width: 1085px; flex: none; align-items: stretch; }
.stab {
  height: 18px;
  display: flex;
  align-items: center;
  justify-content: center;
  white-space: nowrap;
  font-size: 12px;
  letter-spacing: -0.1px;
  clip-path: polygon(0 0, 100% 0, calc(100% - 10px) 100%, 0 100%);
  box-sizing: border-box;
  padding: 0 14px 0 8px;
}
.st-maroon { width: 98px; padding-right: 20px; background: linear-gradient(#9a2a2a, #7a1414); color: #f2e6d8; }
.st-navy { width: 130px; margin-left: -4px; padding-right: 18px; background: linear-gradient(#2430a0, #101478); color: #e4e8f8; clip-path: polygon(10px 0, 100% 0, calc(100% - 10px) 100%, 0 100%); }
.st-maroon2 { width: 90px; margin-left: -9px; background: linear-gradient(#9a2a2a, #7a1414); color: #f2e6d8; clip-path: polygon(10px 0, 100% 0, calc(100% - 10px) 100%, 0 100%); }
.st-pink { width: 133px; margin-left: -9px; padding-right: 18px; background: #ff99cc; color: #1a1a1a; clip-path: polygon(10px 0, 100% 0, calc(100% - 10px) 100%, 0 100%); }
.st-magenta { width: 108px; margin-left: -7px; background: #ff00ff; color: #ffd8ff; clip-path: polygon(10px 0, 100% 0, 100% 100%, 0 100%); }
.st-active {
  width: 94px;
  background: linear-gradient(#fff 55%, #fde2c8);
  color: #111;
  font-family: "Liberation Sans", sans-serif;
  font-weight: 700;
  font-size: 12px;
  letter-spacing: 0;
}
.new-sheet { margin: 2px 0 0 4px; }
.hscroll {
  flex: 1;
  display: flex;
  align-items: center;
  position: relative;
}
.split-v {
  width: 6px;
  height: 13px;
  border: 1px solid #8d939b;
  background: linear-gradient(90deg, #fff 40%, #8d939b 40%, #8d939b 55%, #fff 55%);
  flex: none;
}
.tri-l { margin: 0 6px 0 7px; border-top: 5px solid transparent; border-bottom: 5px solid transparent; border-right: 4px solid #444; }
.tri-r { margin: 0 6px 0 7px; border-top: 5px solid transparent; border-bottom: 5px solid transparent; border-left: 4px solid #444; }
.h-thumb {
  width: 146px;
  height: 15px;
  flex: none;
  box-sizing: border-box;
  border: 1px solid #a0a5ac;
  border-radius: 2px;
  background: linear-gradient(#f5f6f8, #dde0e5);
  display: flex;
  align-items: center;
  justify-content: center;
}
.grip-v { width: 7px; height: 7px; background: repeating-linear-gradient(90deg, #777 0 1px, transparent 1px 2px); }

/* status */
.status {
  height: 21px;
  flex: none;
  display: flex;
  align-items: center;
  background: linear-gradient(#dfe3e9, #c8ccd3);
  box-sizing: border-box;
}
.ready {
  width: 48px;
  height: 100%;
  line-height: 21px;
  padding-left: 8px;
  box-sizing: border-box;
  border-right: 1px solid #b0b4ba;
  color: #4a5058;
}
.status-right {
  margin-left: auto;
  display: flex;
  align-items: center;
  height: 100%;
}
.view { width: 18px; height: 18px; display: flex; align-items: center; justify-content: center; margin-right: 0; box-sizing: border-box; }
.view-on {
  width: 19px;
  background: linear-gradient(#fde9a8, #f9cd62);
  border: 1px solid #d8aa4c;
  border-radius: 2px;
}
.zoom-pct { margin: 0 8px 0 11px; width: 28px; color: #3f4650; }
.zoom-btn {
  width: 14px;
  height: 14px;
  border: 1px solid #8d939b;
  border-radius: 50%;
  background: radial-gradient(#fff, #dfe3e8);
  font: 700 13px/13px "Liberation Sans", sans-serif;
  text-align: center;
  color: #444;
  flex: none;
}
.slider { width: 100px; height: 1px; background: #a5aab1; position: relative; }
.slider-thumb {
  position: absolute;
  left: 46px;
  top: -5px;
  width: 8px;
  height: 9px;
  background: #eef0f3;
  border: 1px solid #7e848c;
  border-radius: 1px 1px 4px 4px;
}
.status-right .zoom-btn:last-child { margin-right: 4px; }

/* taskbar */
.taskbar {
  flex: 1;
  display: flex;
  align-items: center;
  background: linear-gradient(#1e2326, #07090b 30%, #05080a);
  border-top: 1px solid #4a4e52;
  box-sizing: border-box;
  padding-left: 8px;
  gap: 4px;
}
.orb { margin-right: 10px; flex: none; }
.task {
  width: 58px;
  height: 37px;
  flex: none;
  box-sizing: border-box;
  display: flex;
  align-items: center;
  justify-content: center;
}
.framed {
  border: 1px solid #5a5e62;
  border-radius: 3px;
  background: linear-gradient(135deg, #555a5e, #1d2023 45%, #0d0f11 70%, #2c2f32);
}
.active { background: linear-gradient(135deg, #a4a8aa, #606466 45%, #3a3e40 70%, #84888a); border-color: #9a9ea2; }
.ie-e { font: 700 30px "Liberation Sans", sans-serif; fill: #2a9ce8; }
.word-w { font: italic 700 23px "Liberation Serif", serif; fill: #1f4ea8; }
.excel-x { font: 700 24px "Liberation Sans", sans-serif; fill: #2f8a3c; }
.tray {
  margin-left: auto;
  display: flex;
  align-items: center;
  gap: 7px;
}
.tray-up { width: 0; height: 0; border-left: 4px solid transparent; border-right: 4px solid transparent; border-bottom: 4px solid #fff; margin-right: 10px; }
.clock {
  width: 64px;
  margin-left: 5px;
  color: #f2f2f2;
  font-size: 11px;
  display: flex;
  flex-direction: column;
  align-items: center;
  line-height: 16px;
  white-space: nowrap;
}
.show-desk {
  width: 12px;
  height: 38px;
  flex: none;
  margin-right: 2px;
  border: 1px solid #444;
  border-radius: 2px;
  background: linear-gradient(90deg, #3a3e42, #15181a);
  box-sizing: border-box;
}
</style>
